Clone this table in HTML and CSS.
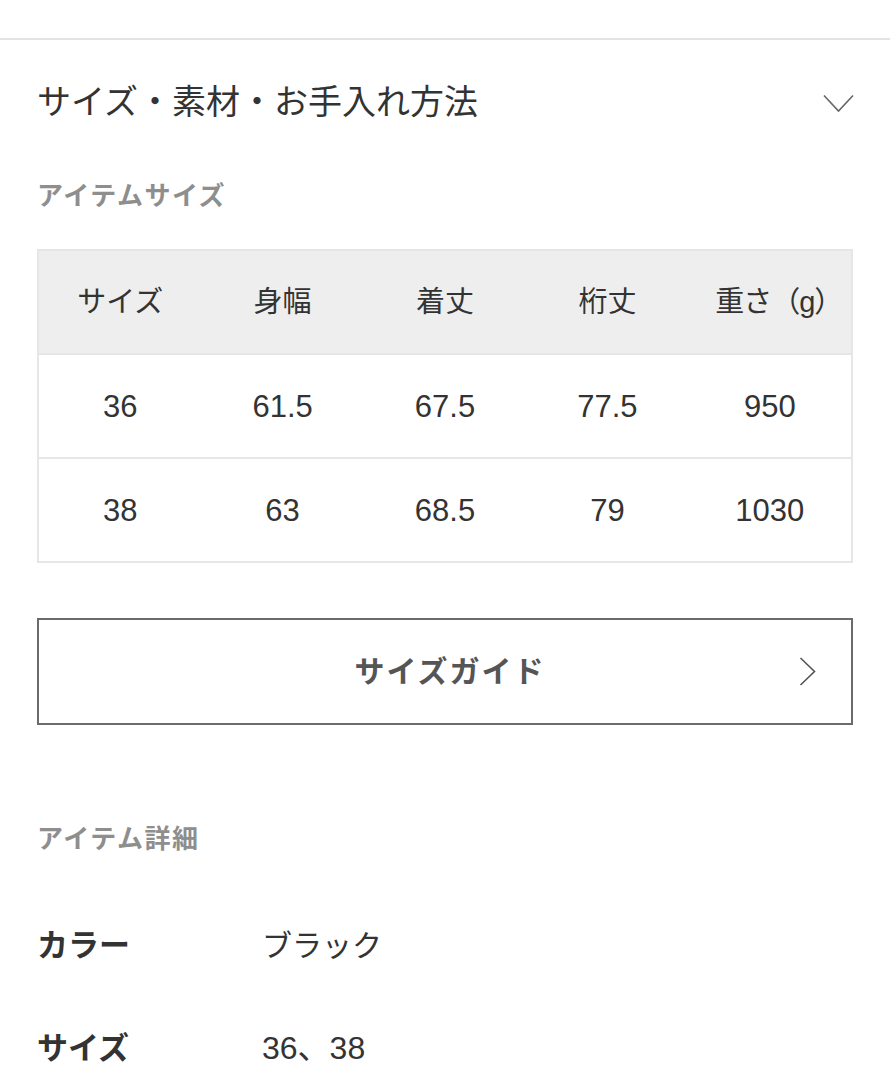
FILE: index.html
```html
<!DOCTYPE html>
<html lang="ja">
<head>
<meta charset="utf-8">
<link rel="stylesheet" href="styles.css">
</head>
<body>
<div class="page">
  <div class="divider"></div>
  <section class="accordion">
    <div class="acc-head">
      <h2 class="acc-title">サイズ・素材・お手入れ方法</h2>
      <svg class="chev-down" width="31" height="19" viewBox="0 0 31 19"><polyline points="1,1.5 15.5,17 30,1.5" fill="none" stroke="#666" stroke-width="1.6"/></svg>
    </div>
    <div class="acc-body">
      <h3 class="sub">アイテムサイズ</h3>
      <div class="size-table">
        <div class="row head">
          <div class="cell">サイズ</div>
          <div class="cell">身幅</div>
          <div class="cell">着丈</div>
          <div class="cell">桁丈</div>
          <div class="cell weight">重さ（g）</div>
        </div>
        <div class="row">
          <div class="cell">36</div>
          <div class="cell">61.5</div>
          <div class="cell">67.5</div>
          <div class="cell">77.5</div>
          <div class="cell">950</div>
        </div>
        <div class="row">
          <div class="cell">38</div>
          <div class="cell">63</div>
          <div class="cell">68.5</div>
          <div class="cell">79</div>
          <div class="cell">1030</div>
        </div>
      </div>
      <a class="guide-btn" href="#">
        <span class="guide-label">サイズガイド</span>
        <svg class="chev-right" width="17" height="29" viewBox="0 0 17 29"><polyline points="1.5,1 15.5,14.5 1.5,28" fill="none" stroke="#555" stroke-width="1.6"/></svg>
      </a>
      <h3 class="sub detail-title">アイテム詳細</h3>
      <dl class="details">
        <div class="drow"><dt>カラー</dt><dd>ブラック</dd></div>
        <div class="drow"><dt>サイズ</dt><dd class="num">36、38</dd></div>
      </dl>
    </div>
  </section>
</div>
</body>
</html>
```
FILE: styles.css
```css
* { box-sizing: border-box; }
html, body { margin: 0; padding: 0; background: #fff; }
body {
  font-family: "Liberation Sans", "Noto Sans CJK JP", sans-serif;
  color: #333;
}
.page { width: 890px; }
.divider { margin-top: 38px; height: 2px; background: #e3e3e3; }
.accordion { padding: 0 37px; }
.acc-head {
  display: flex;
  align-items: center;
  justify-content: space-between;
  height: 124px;
}
.acc-title {
  margin: 0;
  font-size: 34px;
  font-weight: 400;
  color: #333;
  line-height: 1;
}
.chev-down { margin-right: -1px; margin-top: 2px; }
.sub {
  margin: 0;
  font-size: 26px;
  font-weight: 700;
  color: #8e8e8e;
  line-height: 1;
  letter-spacing: 1.5px;
  padding-top: 19px;
}
.size-table {
  margin-top: 40px;
  border: 2px solid #e6e6e6;
  border-bottom: 0;
}
.row {
  display: grid;
  grid-template-columns: repeat(5, 1fr);
  height: 104px;
  border-bottom: 2px solid #e6e6e6;
  align-items: center;
}
.row.head { background: #eeeeee; }
.cell {
  text-align: center;
  font-size: 31px;
  color: #333;
  line-height: 1;
}
.row.head .cell { font-size: 29px; }
.row.head .cell.weight { letter-spacing: -1px; padding-left: 18px; }
.guide-btn {
  display: flex;
  align-items: center;
  justify-content: center;
  position: relative;
  margin-top: 55px;
  height: 107px;
  border: 2px solid #6b6b6b;
  text-decoration: none;
}
.guide-label {
  font-size: 30px;
  font-weight: 700;
  color: #555;
  line-height: 1;
  letter-spacing: 2px;
  margin-left: 10px;
}
.chev-right { position: absolute; right: 35px; top: 37px; }
.detail-title { margin-top: 82px; }
.details { margin: 0; padding-top: 78px; }
.drow { display: flex; align-items: center; }
.drow + .drow { margin-top: 71px; }
dt {
  width: 225px;
  font-size: 31px;
  font-weight: 700;
  color: #333;
  line-height: 1;
}
dd {
  margin: 0;
  font-size: 30px;
  color: #333;
  line-height: 1;
}
dd.num { font-size: 32px; }
```
